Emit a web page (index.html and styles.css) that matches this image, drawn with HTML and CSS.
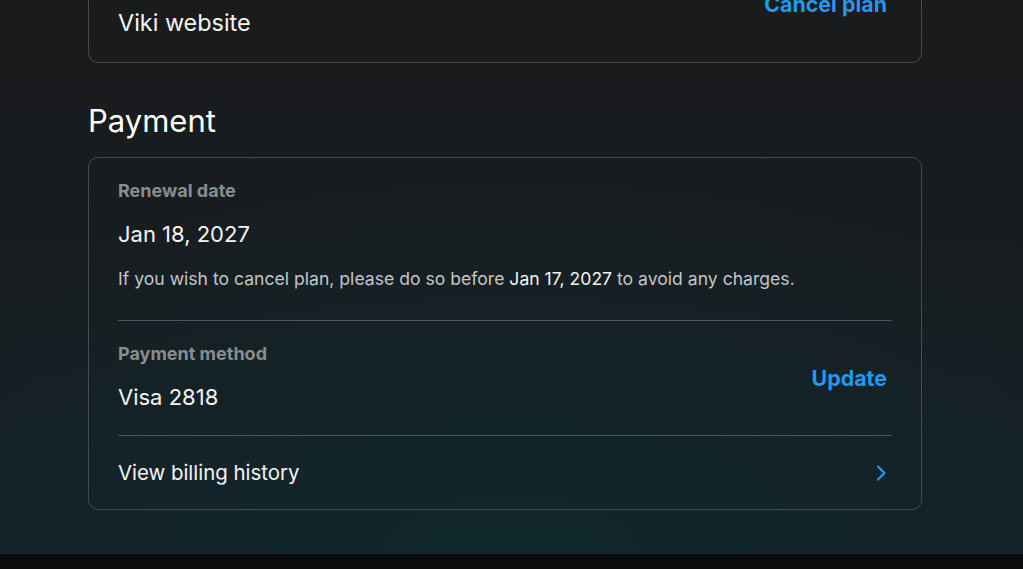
FILE: index.html
```html
<!DOCTYPE html>
<html lang="en">
<head>
    <meta charset="UTF-8">
    <meta name="viewport" content="width=device-width, initial-scale=1.0">
    <title>Viki - Subscription</title>
    <link rel="stylesheet" href="styles.css">
</head>
<body>
    <div class="page">
        <div class="content">
            <div class="card card-top">
                <div class="row row-split">
                    <div>
                        <div class="label">Billed through</div>
                        <div class="value">Viki website</div>
                    </div>
                    <a class="link" href="#">Cancel plan</a>
                </div>
            </div>

            <h2 class="section-title">Payment</h2>
            <div class="card">
                <div class="row row-first">
                    <div class="label">Renewal date</div>
                    <div class="value">Jan 18, 2027</div>
                    <p class="note">If you wish to cancel plan, please do so before <span class="note-date">Jan 17, 2027</span> to avoid any charges.</p>
                </div>
                <div class="row row-split">
                    <div>
                        <div class="label">Payment method</div>
                        <div class="value">Visa 2818</div>
                    </div>
                    <a class="link" href="#">Update</a>
                </div>
                <a class="row row-split row-nav" href="#">
                    <span class="value">View billing history</span>
                    <svg class="chevron" width="12" height="18" viewBox="0 0 12 18">
                        <path d="M3 2.5 L9.5 9 L3 15.5" fill="none" stroke="#1f9af0" stroke-width="2.2" stroke-linecap="round" stroke-linejoin="round"/>
                    </svg>
                </a>
            </div>
        </div>
        <div class="footer-strip"></div>
    </div>
</body>
</html>
```

FILE: styles.css
```css
body {
    margin: 0;
    padding: 0;
    font-family: Inter, "Noto Sans", sans-serif;
    color: #f4f4f4;
    background-color: #0b0b0b;
    overflow: hidden;
}
.page {
    height: 569px;
    display: flex;
    flex-direction: column;
    background:
        radial-gradient(ellipse 70% 70% at 50% 100%, #10282d 0%, rgba(16, 40, 45, 0) 100%),
        linear-gradient(180deg, #1a1b1d 0%, #181d20 50%, #142228 100%);
}
.content {
    flex: 1;
    width: 834px;
    margin-left: 88px;
    overflow: hidden;
}
.card {
    border: 1px solid #45494d;
    border-radius: 10px;
    padding: 0 29px;
}
.card-top {
    margin-top: -53px;
    border-top: none;
}
.row {
    padding: 23px 0 24px;
    border-top: 1px solid #4d5357;
}
.row:first-child {
    border-top: none;
}
.row-first {
    padding-bottom: 29px;
}
.card-top .row {
    padding-bottom: 25px;
}
.row-split {
    display: flex;
    align-items: center;
    justify-content: space-between;
}
.row-nav {
    text-decoration: none;
    color: inherit;
    padding-bottom: 22px;
}
.label {
    font-size: 18px;
    line-height: 20px;
    font-weight: 700;
    color: #8a8c8e;
}
.value {
    font-size: 22px;
    line-height: 28px;
    color: #f4f4f4;
    margin-top: 19px;
}
.row-nav .value {
    font-size: 20.4px;
    margin-top: 0;
}
.card-top .value {
    font-size: 23.4px;
}
.note {
    margin: 19px 0 0;
    font-size: 17.6px;
    line-height: 24px;
    color: #c2c6ca;
}
.note-date {
    color: #f4f4f4;
}
.link {
    color: #1f9af0;
    font-weight: 700;
    font-size: 21.4px;
    text-decoration: none;
    margin-right: 5px;
}
.chevron {
    margin-right: 5px;
}
.section-title {
    margin: 40px 0 18px;
    font-size: 31px;
    line-height: 36px;
    font-weight: 400;
    color: #ffffff;
}
.footer-strip {
    height: 15px;
    background-color: #0b0b0b;
    border-top: 1px solid #1d2a2f;
}
```
